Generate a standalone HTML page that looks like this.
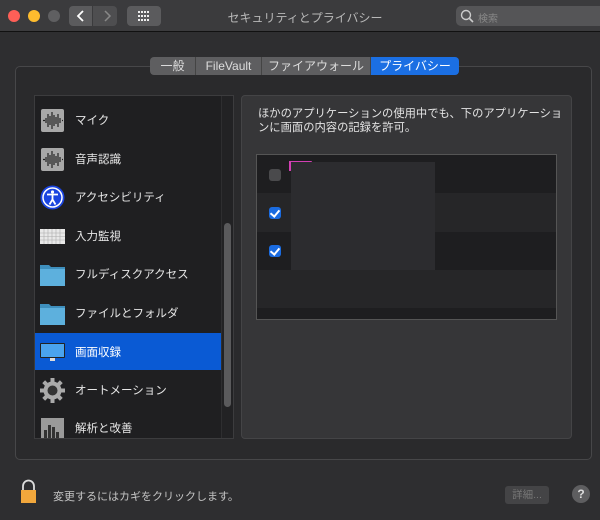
<!DOCTYPE html>
<html><head><meta charset="utf-8"><style>
*{margin:0;padding:0;box-sizing:border-box}
body{width:600px;height:520px;background:#2e2e30;font-family:"Liberation Sans","Noto Sans CJK JP",sans-serif;position:relative;overflow:hidden;color:#ddd}
.a{position:absolute}
.tb{left:0;top:0;width:600px;height:32px;background:#3b3b3d;border-bottom:1px solid #111}
.dot{width:12px;height:12px;border-radius:50%;top:10px}
.btn{background:#5b5b5d;border-radius:4px;top:6px;height:20px}
.row{left:0;width:186px;height:38.5px;font-size:11.5px;color:#e6e6e6;display:flex;align-items:center;padding-left:40px}
.ic{position:absolute;left:5px;top:7px;width:25px;height:25px}
.tab{top:57px;height:18px;font-size:12px;color:#ddd;text-align:center;line-height:18px;background:#5e5e60;border-right:1px solid #444}
.cb{left:12px;width:12px;height:12px;border-radius:3px}
.on{background:#1a6be0}
.on::after{content:"";position:absolute;left:3px;top:1px;width:4px;height:7px;border:solid #fff;border-width:0 2px 2px 0;transform:rotate(40deg)}
.off{background:#4a4a4c}
</style></head><body>
<div class="a tb"></div>
<div class="a dot" style="left:8px;background:#fe5f57"></div>
<div class="a dot" style="left:28px;background:#febc2e"></div>
<div class="a dot" style="left:48px;background:#5f5f61"></div>
<div class="a btn" style="left:69px;width:23px;border-radius:4px 0 0 4px"></div>
<div class="a btn" style="left:93px;width:24px;border-radius:0 4px 4px 0;background:#4e4e50"></div>
<svg class="a" style="left:69px;top:6px" width="48" height="20"><path d="M14 5 L9 10 L14 15" stroke="#fff" stroke-width="1.8" fill="none"/><path d="M36 5 L41 10 L36 15" stroke="#888" stroke-width="1.5" fill="none"/></svg>
<div class="a btn" style="left:127px;width:34px"></div>
<svg class="a" style="left:138px;top:11px" width="12" height="10"><g fill="#eee"><rect x="0" y="0" width="2" height="2"/><rect x="3" y="0" width="2" height="2"/><rect x="6" y="0" width="2" height="2"/><rect x="9" y="0" width="2" height="2"/><rect x="0" y="4" width="2" height="2"/><rect x="3" y="4" width="2" height="2"/><rect x="6" y="4" width="2" height="2"/><rect x="9" y="4" width="2" height="2"/><rect x="0" y="8" width="2" height="2"/><rect x="3" y="8" width="2" height="2"/><rect x="6" y="8" width="2" height="2"/><rect x="9" y="8" width="2" height="2"/></g></svg>
<div class="a" style="left:200px;top:9px;width:210px;text-align:center;font-size:12px;color:#b8b8b8">セキュリティとプライバシー</div>
<div class="a" style="left:456px;top:6px;width:150px;height:20px;background:#555557;border-radius:5px"></div>
<svg class="a" style="left:460px;top:9px" width="14" height="14"><circle cx="6" cy="6" r="4.5" stroke="#ccc" stroke-width="1.4" fill="none"/><path d="M9.5 9.5 L13 13" stroke="#ccc" stroke-width="1.6"/></svg>
<div class="a" style="left:478px;top:10px;font-size:10px;color:#888">検索</div>

<div class="a" style="left:15px;top:66px;width:577px;height:394px;border:1px solid #474749;border-radius:5px;background:#2a2a2c"></div>
<div class="a tab" style="left:150px;width:46px;border-radius:4px 0 0 4px">一般</div>
<div class="a tab" style="left:196px;width:66px">FileVault</div>
<div class="a tab" style="left:262px;width:109px">ファイアウォール</div>
<div class="a tab" style="left:371px;width:88px;background:#1b6fe3;color:#fff;border-radius:0 4px 4px 0;border:none">プライバシー</div>

<div class="a" style="left:34px;top:95px;width:200px;height:344px;background:#1f1f21;border:1px solid #3c3c3e;overflow:hidden">
 <div class="a row" style="top:5px"><svg class="ic" viewBox="0 0 25 25"><rect x="1" y="1" width="23" height="23" rx="2" fill="#a8a8a8"/><g stroke="#222" stroke-width="1.2"><path d="M3 12.5h2M6 10v5M8 6v13M10 8v9M12 4v17M14 7v11M16 9v7M18 6v13M20 10v5M22 12.5h1"/></g></svg>マイク</div>
 <div class="a row" style="top:43.5px"><svg class="ic" viewBox="0 0 25 25"><rect x="1" y="1" width="23" height="23" rx="2" fill="#a8a8a8"/><g stroke="#222" stroke-width="1.2"><path d="M3 12.5h2M6 10v5M8 6v13M10 8v9M12 4v17M14 7v11M16 9v7M18 6v13M20 10v5M22 12.5h1"/></g></svg>音声認識</div>
 <div class="a row" style="top:82px"><svg class="ic" viewBox="0 0 25 25"><circle cx="12.5" cy="12.5" r="12" fill="#1b45e0"/><circle cx="12.5" cy="12.5" r="9.5" fill="none" stroke="#fff" stroke-width="1.5"/><circle cx="12.5" cy="7" r="1.6" fill="#fff"/><path d="M7 9.5h11M12.5 9.5v5M12.5 14.5l-3 5M12.5 14.5l3 5" stroke="#fff" stroke-width="1.8" fill="none"/></svg>アクセシビリティ</div>
 <div class="a row" style="top:120.5px"><svg class="ic" viewBox="0 0 25 25"><rect x="0" y="5" width="25" height="15" fill="#e8e8e8"/><g stroke="#aaa" stroke-width="0.6"><path d="M0 9h25M0 12.5h25M0 16h25M4 5v15M8 5v15M12 5v15M16 5v15M20 5v15"/></g></svg>入力監視</div>
 <div class="a row" style="top:159px"><svg class="ic" viewBox="0 0 25 25"><path d="M0 3h9l2 2h14v19H0z" fill="#3e8fbd"/><rect x="0" y="7" width="25" height="17" fill="#5db0dd"/></svg>フルディスクアクセス</div>
 <div class="a row" style="top:197.5px"><svg class="ic" viewBox="0 0 25 25"><path d="M0 3h9l2 2h14v19H0z" fill="#3e8fbd"/><rect x="0" y="7" width="25" height="17" fill="#5db0dd"/></svg>ファイルとフォルダ</div>
 <div class="a row" style="top:237px;background:#0a5ad4;color:#fff;height:37px"><svg class="ic" viewBox="0 0 25 25" style="top:6px"><rect x="0" y="4" width="25" height="15" rx="1" fill="#222"/><rect x="1" y="5" width="23" height="13" fill="#4aa3ee"/><rect x="10" y="19" width="5" height="3" fill="#ddd"/></svg>画面収録</div>
 <div class="a row" style="top:274.5px"><svg class="ic" viewBox="0 0 25 25"><g fill="#aaa"><circle cx="12.5" cy="12.5" r="9"/><g stroke="#aaa" stroke-width="4"><path d="M12.5 0v25M0 12.5h25M3.7 3.7l17.6 17.6M21.3 3.7L3.7 21.3"/></g></g><circle cx="12.5" cy="12.5" r="5" fill="#333"/></svg>オートメーション</div>
 <div class="a row" style="top:313px"><svg class="ic" viewBox="0 0 25 25"><rect x="1" y="2" width="23" height="23" fill="#9a9a9a"/><g fill="#333"><rect x="4" y="14" width="3" height="10"/><rect x="8" y="9" width="3" height="15"/><rect x="12" y="11" width="3" height="13"/><rect x="16" y="16" width="3" height="8"/></g></svg>解析と改善</div>
 <div class="a" style="left:186px;top:0;width:13px;height:344px;background:#222224;border-left:1px solid #2e2e30"></div>
 <div class="a" style="left:189px;top:127px;width:7px;height:184px;background:#5a5a5c;border-radius:4px"></div>
</div>

<div class="a" style="left:241px;top:95px;width:331px;height:344px;background:#363638;border:1px solid #444446;border-radius:4px"></div>
<div class="a" style="left:258px;top:107px;width:310px;font-size:11.3px;line-height:14px;color:#e4e4e4">ほかのアプリケーションの使用中でも、下のアプリケーションに画面の内容の記録を許可。</div>
<div class="a" style="left:256px;top:154px;width:301px;height:166px;border:1px solid #555;background:#1e1e20;overflow:hidden">
 <div class="a" style="left:0;top:38px;width:300px;height:39px;background:#262628"></div>
 <div class="a" style="left:0;top:115px;width:300px;height:38px;background:#262628"></div>
 <div class="a cb off" style="top:14px"></div>
 <div class="a cb on" style="top:52px"></div>
 <div class="a cb on" style="top:90px"></div>
 <div class="a" style="left:33px;top:6px;width:22px;height:2px;background:#d23fb3;border-radius:2px"></div>
 <div class="a" style="left:32px;top:6px;width:2px;height:10px;background:#d23fb3"></div>
 <div class="a" style="left:34px;top:7px;width:144px;height:108px;background:#2c2c2f"></div>
</div>

<svg class="a" style="left:20px;top:479px" width="17" height="25"><path d="M3 11V7a5.5 5.5 0 0 1 11 0v4" stroke="#ddd" stroke-width="1.8" fill="none"/><rect x="1" y="11" width="15" height="13" fill="#f1a73c"/></svg>
<div class="a" style="left:53px;top:488px;font-size:11px;color:#c4c4c4">変更するにはカギをクリックします。</div>
<div class="a" style="left:505px;top:486px;width:44px;height:18px;background:#444446;border-radius:3px;font-size:10.5px;color:#777;text-align:center;line-height:18px">詳細...</div>
<div class="a" style="left:572px;top:485px;width:18px;height:18px;border-radius:50%;background:#5e5e60;color:#ddd;font-size:12px;text-align:center;line-height:18px;font-weight:bold">?</div>
</body></html>
